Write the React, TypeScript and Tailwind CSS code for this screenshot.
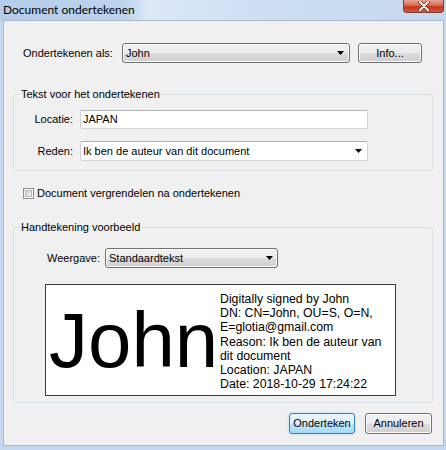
const btn =
  'border border-[#707070] rounded-[3px] bg-[linear-gradient(to_bottom,#f2f2f2_0%,#ebebeb_50%,#dddddd_50%,#cfcfcf_100%)] shadow-[inset_0_0_0_1px_#fcfcfc]';

const field = 'border border-[#cfd4da] border-t-[#aeb2b8] bg-white rounded-[2px]';

function Arrow() {
  return (
    <svg width="7" height="4" viewBox="0 0 7 4" className="shrink-0">
      <polygon points="0,0 7,0 3.5,4" fill="#000" />
    </svg>
  );
}

export default function App() {
  return (
    <div
      className="w-[446px] h-[450px] flex flex-col bg-[#c3d7ee] text-black overflow-hidden"
      style={{ fontFamily: '"Liberation Sans", Arial, sans-serif' }}
    >
      {/* Title bar */}
      <div className="h-[20px] flex items-start bg-[linear-gradient(to_right,#b5cde9_0%,#bdd3ec_28%,#dbe8f6_33%,#cfe0f3_55%,#c4d8ef_100%)]">
        <span
          className="pl-[3px] pt-[1px] text-[12px] leading-[17px]"
          style={{ fontFamily: '"Segoe UI", Lato, sans-serif' }}
        >
          Document ondertekenen
        </span>
        <div className="ml-auto mr-[2px] w-[41px] h-[13px] rounded-b-[4px] border border-t-0 border-[#8a3a2c] bg-[linear-gradient(to_bottom,#e7a595_0%,#d86a53_45%,#c5381f_55%,#d15a3c_100%)] flex items-center justify-center">
          <svg width="12" height="10" viewBox="0 0 12 10">
            <path d="M2 1 L10 9 M10 1 L2 9" stroke="#6b2a20" strokeWidth="3.4" strokeLinecap="round" />
            <path d="M2 1 L10 9 M10 1 L2 9" stroke="#fff" strokeWidth="2" strokeLinecap="round" />
          </svg>
        </div>
      </div>

      {/* Client area */}
      <div className="ml-[3px] mr-[2px] mb-[4px] flex-1 bg-[#f0f0f0] border border-[#a7bad0] flex flex-col text-[11px]">
        {/* Sign as */}
        <div className="mt-[22px] h-[20px] flex items-center">
          <span className="ml-[19px] w-[99px]">Ondertekenen als:</span>
          <div className={`${btn} w-[228px] h-[20px] flex items-center pl-[3px] pr-[5px]`}>
            <span className="flex-1">John</span>
            <Arrow />
          </div>
          <div className={`${btn} ml-[8px] w-[64px] h-[20px] flex items-center justify-center`}>Info...</div>
        </div>

        {/* Group 1 */}
        <fieldset className="mt-[24px] ml-[9px] w-[420px] border border-[#d5dfe5] rounded-[3px] pb-[9px]">
          <legend className="ml-[6px] px-[1px] leading-[14px]">Tekst voor het ondertekenen</legend>
          <div className="mt-[9px] flex items-center">
            <span className="w-[59px] text-right">Locatie:</span>
            <div className={`${field} ml-[7px] w-[288px] h-[19px] flex items-center pl-[2px]`}>JAPAN</div>
          </div>
          <div className="mt-[12px] flex items-center">
            <span className="w-[59px] text-right">Reden:</span>
            <div className={`${field} ml-[7px] w-[288px] h-[20px] flex items-center pl-[2px] pr-[5px]`}>
              <span className="flex-1">Ik ben de auteur van dit document</span>
              <Arrow />
            </div>
          </div>
        </fieldset>

        {/* Checkbox */}
        <div className="mt-[16px] h-[13px] flex items-center">
          <div className="ml-[19px] w-[11px] h-[11px] border border-[#8e8f8f] bg-[#f7f7f7] p-[1px]">
            <div className="w-full h-full border border-[#b5b9bf] bg-[linear-gradient(135deg,#cbcfd5,#f3f3f3)]" />
          </div>
          <span className="ml-[3px]">Document vergrendelen na ondertekenen</span>
        </div>

        {/* Group 2 */}
        <fieldset className="mt-[20px] ml-[9px] w-[420px] border border-[#d5dfe5] rounded-[3px] pb-[6px]">
          <legend className="ml-[6px] px-[1px] leading-[14px]">Handtekening voorbeeld</legend>
          <div className="mt-[14px] flex items-center">
            <span className="ml-[33px] w-[58px]">Weergave:</span>
            <div className={`${btn} w-[173px] h-[20px] flex items-center pl-[3px] pr-[4px]`}>
              <span className="flex-1">Standaardtekst</span>
              <Arrow />
            </div>
          </div>
          <div className="mt-[16px] ml-[31px] w-[351px] h-[112px] border border-[#3a3a3a] bg-white flex items-start">
            <div className="w-[174px] shrink-0 pl-[3px] mt-[16px] text-[78px] leading-[78px] whitespace-nowrap">
              John
            </div>
            <div className="mt-[7px] text-[12.3px] leading-[14.2px]">
              <div>Digitally signed by John</div>
              <div>DN: CN=John, OU=S, O=N,</div>
              <div>E=glotia@gmail.com</div>
              <div>Reason: Ik ben de auteur van</div>
              <div>dit document</div>
              <div>Location: JAPAN</div>
              <div>Date: 2018-10-29 17:24:22</div>
            </div>
          </div>
        </fieldset>

        {/* Buttons */}
        <div className="mt-[10px] flex justify-end pr-[11px]">
          <div className="w-[66px] h-[21px] flex items-center justify-center border border-[#3c7fb1] rounded-[3px] bg-[linear-gradient(to_bottom,#eaf6fd_0%,#d9f0fc_50%,#bee6fd_50%,#a7d9f5_100%)] shadow-[0_0_2px_#8fd3f7]">
            Onderteken
          </div>
          <div className={`${btn} ml-[10px] w-[67px] h-[21px] flex items-center justify-center`}>Annuleren</div>
        </div>
      </div>
    </div>
  );
}
